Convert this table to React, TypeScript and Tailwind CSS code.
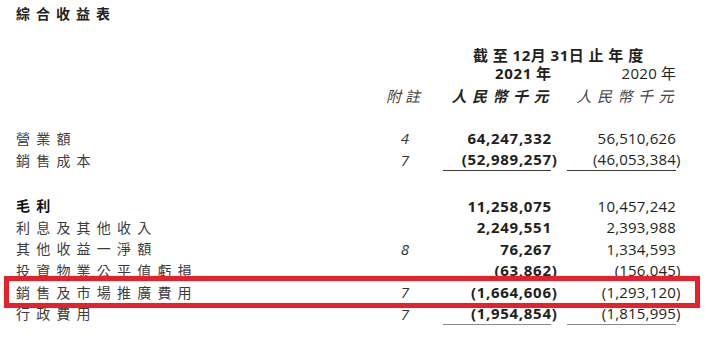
const rows = [
  { label: '營業額', note: '4', cur: '64,247,332', prev: '56,510,626' },
  { label: '銷售成本', note: '7', cur: '(52,989,257)', prev: '(46,053,384)', line: 'dark' },
];

const rows2 = [
  { label: '毛利', note: '', cur: '11,258,075', prev: '10,457,242', strong: true },
  { label: '利息及其他收入', note: '', cur: '2,249,551', prev: '2,393,988' },
  { label: '其他收益一淨額', note: '8', cur: '76,267', prev: '1,334,593' },
  { label: '投資物業公平值虧損', note: '', cur: '(63,862)', prev: '(156,045)' },
  { label: '銷售及市場推廣費用', note: '7', cur: '(1,664,606)', prev: '(1,293,120)' },
  { label: '行政費用', note: '7', cur: '(1,954,854)', prev: '(1,815,995)', line: 'gray' },
];

type Row = { label: string; note: string; cur: string; prev: string; strong?: boolean; line?: string };

const font = "font-['Open_Sans','Noto_Sans_CJK_TC',sans-serif]";

// closing paren hangs past the column edge
const Num = ({ value }: { value: string }) => {
  if (value.endsWith(')')) {
    return (
      <>
        {value.slice(0, -1)}
        <span className="inline-block w-0">)</span>
      </>
    );
  }
  return <>{value}</>;
};

const FinRow = ({ row, h }: { row: Row; h: string }) => {
  const border =
    row.line === 'dark' ? 'border-b border-[#3a3a3a]' : row.line === 'gray' ? 'border-b border-[#8a8a8a]' : '';
  return (
    <div className={`flex items-center ${h}`}>
      <div
        className={`w-[380px] shrink-0 pl-[16px] text-[14px] tracking-[6.2px] ${
          row.strong ? 'font-bold text-[#111]' : 'text-[#3b3b3b]'
        }`}
      >
        {row.label}
      </div>
      <div className="w-[50px] shrink-0 text-center text-[15px] italic text-[#333]">{row.note}</div>
      <div className="w-[13px] shrink-0" />
      <div
        className={`flex h-full w-[108px] shrink-0 items-center justify-end text-[15px] font-bold tracking-[0.7px] text-[#231f20] ${border}`}
      >
        <span className="mr-[-0.7px]">
          <Num value={row.cur} />
        </span>
      </div>
      <div className="w-[16px] shrink-0" />
      <div
        className={`flex h-full w-[109px] shrink-0 items-center justify-end text-[15px] tracking-[0.2px] text-[#231f20] ${border}`}
      >
        <span>
          <Num value={row.prev} />
        </span>
      </div>
    </div>
  );
};

export default function App() {
  return (
    <div className={`relative w-[706px] h-[339px] overflow-hidden bg-white ${font}`}>
      <div className="h-[28px] pl-[16px] text-[14px] font-bold leading-[28px] tracking-[6px] text-[#222]">
        綜合收益表
      </div>

      <div className="mt-[18px] flex h-[18px] items-center leading-[18px]">
        <div className="w-[473px] shrink-0" />
        <div className="text-[15px] font-bold text-[#231f20] tracking-[4.8px] whitespace-nowrap">
          截至<span className="tracking-[0.5px]">12</span>月<span className="tracking-[0.5px]">31</span>日止年度
        </div>
      </div>
      <div className="flex h-[18px] items-center leading-[18px] text-[15px]">
        <div className="w-[443px] shrink-0" />
        <div className="w-[108px] shrink-0 text-right font-bold text-[#231f20]">
          <span className="tracking-[0.7px]">2021</span> 年
        </div>
        <div className="w-[16px] shrink-0" />
        <div className="w-[109px] shrink-0 text-right text-[#231f20]">
          <span className="tracking-[0.3px]">2020</span> 年
        </div>
      </div>
      <div className="flex h-[28px] items-center leading-[28px] text-[15px] italic">
        <div className="w-[380px] shrink-0" />
        <div className="w-[50px] shrink-0 text-center tracking-[4px] text-[#444]">附註</div>
        <div className="w-[13px] shrink-0" />
        <div className="w-[108px] shrink-0 text-right font-bold tracking-[5.5px] text-[#231f20]">
          <span className="mr-[-3px]">人民幣千元</span>
        </div>
        <div className="w-[16px] shrink-0" />
        <div className="w-[109px] shrink-0 text-right tracking-[5.5px] text-[#444]">
          <span className="mr-[-3px]">人民幣千元</span>
        </div>
      </div>

      <div className="mt-[17px]">
        {rows.map((r) => (
          <FinRow key={r.label} row={r} h="h-[22px]" />
        ))}
      </div>
      <div className="mt-[24px]">
        {rows2.map((r) => (
          <FinRow key={r.label} row={r} h="h-[21.6px]" />
        ))}
      </div>

      {/* highlight box */}
      <div className="absolute left-[4px] top-[276px] h-[32px] w-[696px] border-[5px] border-[#e8202a]" />
    </div>
  );
}
